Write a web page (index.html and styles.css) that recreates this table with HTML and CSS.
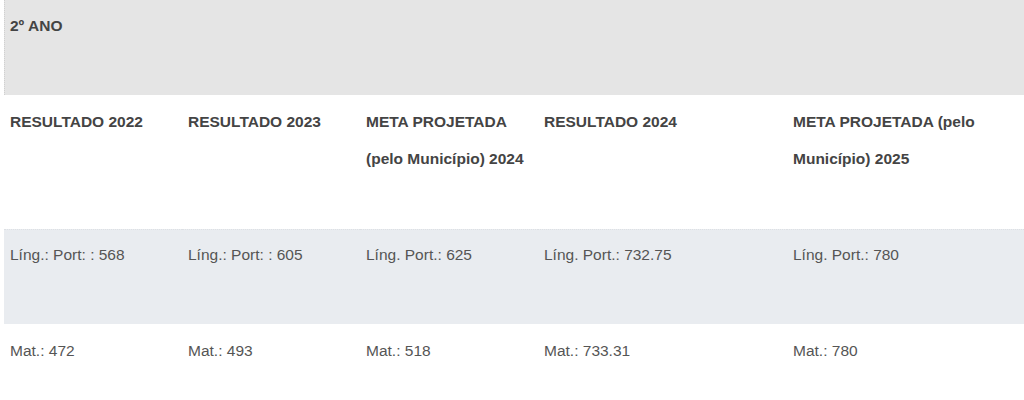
FILE: index.html
```html
<!DOCTYPE html>
<html lang="pt-BR">
<head>
<meta charset="utf-8">
<title>2º ANO</title>
<link rel="stylesheet" href="styles.css">
</head>
<body>
<table class="results">
  <colgroup>
    <col class="c1"><col class="c2"><col class="c3"><col class="c4"><col class="c5">
  </colgroup>
  <tbody>
    <tr class="band">
      <td colspan="5"><strong>2º ANO</strong></td>
    </tr>
    <tr class="head">
      <td><strong>RESULTADO 2022</strong></td>
      <td><strong>RESULTADO 2023</strong></td>
      <td><strong>META PROJETADA (pelo Município) 2024</strong></td>
      <td><strong>RESULTADO 2024</strong></td>
      <td><strong>META PROJETADA (pelo Município) 2025</strong></td>
    </tr>
    <tr class="stripe">
      <td>Líng.: Port: : 568</td>
      <td>Líng.: Port: : 605</td>
      <td>Líng. Port.: 625</td>
      <td>Líng. Port.: 732.75</td>
      <td>Líng. Port.: 780</td>
    </tr>
    <tr class="plain">
      <td>Mat.: 472</td>
      <td>Mat.: 493</td>
      <td>Mat.: 518</td>
      <td>Mat.: 733.31</td>
      <td>Mat.: 780</td>
    </tr>
  </tbody>
</table>
</body>
</html>
```

FILE: styles.css
```css
html, body {
  margin: 0;
  padding: 0;
  background: #ffffff;
}
body {
  padding-left: 4px;
  font-family: "Liberation Sans", Arial, sans-serif;
  font-size: 15.5px;
  color: #555555;
}
.results {
  width: 1020px;
  border-collapse: separate;
  border-spacing: 0;
  table-layout: fixed;
}
.c1, .c2, .c3 { width: 178px; }
.c4 { width: 249px; }
.c5 { width: 237px; }
.results td {
  padding: 7px 6px 51px 6px;
  line-height: 37px;
  vertical-align: top;
  text-align: left;
}
.results strong {
  font-weight: bold;
  color: #444444;
}
.band td {
  background: #e5e5e5;
  border-left: 1px dotted #d0d0d0;
  padding-left: 5px;
}
.head td {
  background: #ffffff;
  padding-top: 8px;
  padding-bottom: 52px;
}
.stripe td {
  background: #e9ecf0;
  border-top: 1px dotted #dde0e4;
  padding-top: 6px;
}
.plain td {
  background: #ffffff;
  padding-top: 8px;
}
```
